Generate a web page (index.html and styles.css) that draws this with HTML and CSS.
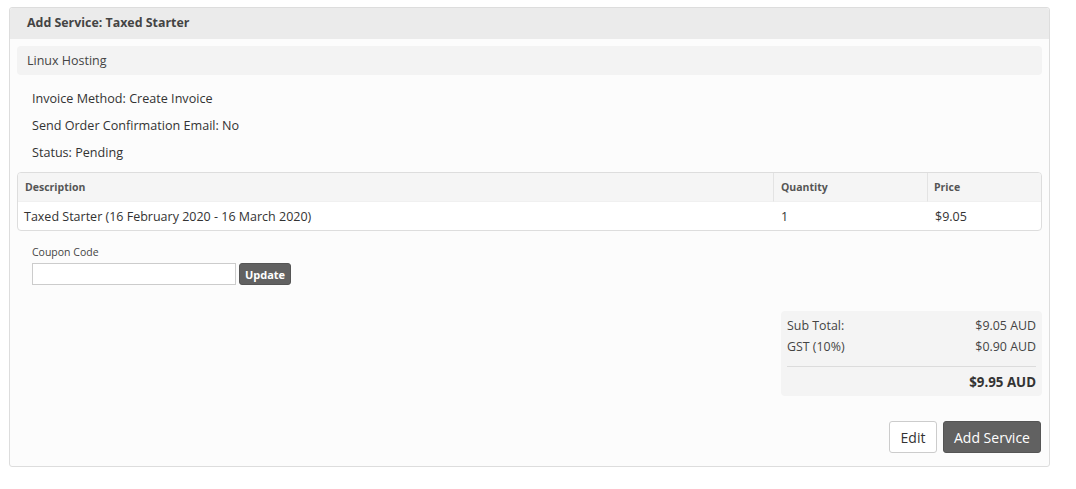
FILE: index.html
```html
<!DOCTYPE html>
<html>
<head>
<meta charset="utf-8">
<link rel="stylesheet" href="styles.css">
</head>
<body>
<div class="panel">
  <div class="panel-head">Add Service: Taxed Starter</div>
  <div class="panel-body">
    <div class="group">Linux Hosting</div>
    <div class="meta">
      <div class="meta-row">Invoice Method: Create Invoice</div>
      <div class="meta-row">Send Order Confirmation Email: No</div>
      <div class="meta-row">Status: Pending</div>
    </div>
    <table class="items">
      <thead>
        <tr><th class="c-desc">Description</th><th class="c-qty">Quantity</th><th class="c-price">Price</th></tr>
      </thead>
      <tbody>
        <tr><td>Taxed Starter (16 February 2020 - 16 March 2020)</td><td class="td-qty">1</td><td>$9.05</td></tr>
      </tbody>
    </table>
    <div class="coupon">
      <label class="coupon-label">Coupon Code</label>
      <div class="coupon-row">
        <input class="coupon-input" type="text">
        <button class="btn-small">Update</button>
      </div>
    </div>
    <div class="totals-wrap">
      <div class="totals">
        <div class="t-row"><span>Sub Total:</span><span>$9.05 AUD</span></div>
        <div class="t-row"><span>GST (10%)</span><span>$0.90 AUD</span></div>
        <div class="t-sep"></div>
        <div class="t-row t-total"><span></span><span>$9.95 AUD</span></div>
      </div>
    </div>
    <div class="actions">
      <button class="btn btn-default">Edit</button>
      <button class="btn btn-dark">Add Service</button>
    </div>
  </div>
</div>
</body>
</html>
```

FILE: styles.css
```css
html, body {
  margin: 0;
  padding: 0;
  background: #ffffff;
}
body {
  font-family: "Open Sans", "DejaVu Sans", sans-serif;
  color: #333333;
  font-size: 12px;
  padding: 7px 26px 0 9px;
}
.panel {
  width: 1041px;
  border: 1px solid #dddddd;
  border-radius: 3px;
  background: #fcfcfc;
  box-sizing: border-box;
}
.panel-head {
  height: 31px;
  line-height: 30px;
  background: #ebebeb;
  padding: 0 0 0 17px;
  font-weight: bold;
  font-size: 12.4px;
  color: #444444;
  border-radius: 3px 3px 0 0;
}
.panel-body {
  padding: 7px 7px 13px 7px;
}
.group {
  height: 29px;
  line-height: 29px;
  background: #f3f3f3;
  border-radius: 4px;
  padding: 0 10px;
  font-size: 12.5px;
  color: #444444;
}
.meta {
  padding: 10px 15px 6px 15px;
}
.meta-row {
  height: 27px;
  line-height: 27px;
  font-size: 12.6px;
  color: #333333;
}
.items {
  width: 100%;
  table-layout: fixed;
  border-collapse: separate;
  border-spacing: 0;
  border: 1px solid #dddddd;
  border-radius: 4px;
  background: #ffffff;
  overflow: hidden;
}
.items th, .items td {
  box-sizing: border-box;
}
.items th {
  background: #f5f5f5;
  text-align: left;
  font-size: 10.5px;
  font-weight: bold;
  color: #555555;
  height: 29px;
  padding: 0 7px;
  border-bottom: 1px solid #f0f0f0;
}
.items th + th {
  border-left: 1px solid #e3e3e3;
}
.items th.c-price {
  padding-left: 6px;
}
.items td {
  height: 28px;
  padding: 0 7px 0 6px;
  font-size: 12.5px;
  color: #333333;
}
.items td + td {
  padding-left: 8px;
}
.c-qty { width: 154px; }
.c-price { width: 114px; }
.coupon {
  padding: 14px 15px 0 15px;
}
.coupon-label {
  display: block;
  font-size: 10.5px;
  color: #444444;
  height: 18px;
  line-height: 15px;
}
.coupon-row {
  display: flex;
  gap: 3px;
  align-items: flex-start;
}
.coupon-input {
  width: 204px;
  height: 22px;
  box-sizing: border-box;
  border: 1px solid #cccccc;
  border-radius: 0;
  background: #ffffff;
  margin: 0;
  padding: 0 4px;
}
.btn-small {
  height: 22px;
  width: 52px;
  box-sizing: border-box;
  margin: 0;
  border: 1px solid #555555;
  border-radius: 3px;
  background: #616161;
  color: #ffffff;
  font-family: "Open Sans", sans-serif;
  font-weight: bold;
  font-size: 11px;
  padding: 0;
}
.totals-wrap {
  display: flex;
  justify-content: flex-end;
  padding-top: 26px;
}
.totals {
  width: 261px;
  box-sizing: border-box;
  background: #f4f4f4;
  border-radius: 4px;
  padding: 4px 6px 4px 6px;
}
.t-row {
  display: flex;
  justify-content: space-between;
  font-size: 12.4px;
  color: #444444;
  height: 21px;
  line-height: 21px;
}
.t-sep {
  height: 1px;
  background: #dcdcdc;
  margin: 9px 0 5px 0;
}
.t-total {
  font-weight: bold;
  font-size: 13.3px;
  color: #333333;
  height: 20px;
  line-height: 20px;
}
.actions {
  display: flex;
  justify-content: flex-end;
  gap: 6px;
  padding: 25px 1px 0 0;
}
.btn {
  height: 32px;
  box-sizing: border-box;
  border-radius: 3px;
  font-family: "Open Sans", sans-serif;
  font-size: 14px;
  padding: 0;
  margin: 0;
}
.btn-default {
  background: #ffffff;
  border: 1px solid #cccccc;
  color: #333333;
  width: 48px;
}
.btn-dark {
  background: #616161;
  border: 1px solid #555555;
  color: #ffffff;
  width: 98px;
}
```
